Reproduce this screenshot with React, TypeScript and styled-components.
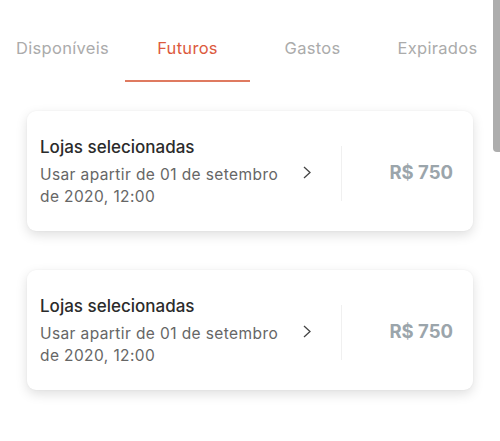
import React, { useState } from "react";
import styled, { createGlobalStyle } from "styled-components";

const GlobalStyle = createGlobalStyle`
  html, body {
    margin: 0;
    padding: 0;
    background: #ffffff;
    font-family: "Inter", "Open Sans", sans-serif;
  }
`;

const Page = styled.div`
  position: relative;
  width: 500px;
  height: 441px;
  overflow: hidden;
  background: #ffffff;
`;

const TabBar = styled.div`
  display: grid;
  grid-template-columns: repeat(4, 1fr);
  height: 82px;
`;

interface TabProps {
  active?: boolean;
}

const Tab = styled.div<TabProps>`
  display: flex;
  justify-content: center;
  align-items: flex-start;
  padding-top: 38px;
  box-sizing: border-box;
  font-size: 16.5px;
  letter-spacing: 0.3px;
  color: ${(props) => (props.active ? "#dc5a3e" : "#ababab")};
  border-bottom: 2px solid
    ${(props) => (props.active ? "#df7a60" : "transparent")};
`;

const List = styled.div`
  display: flex;
  flex-direction: column;
  gap: 39px;
  padding: 29px 27px 0;
`;

const Card = styled.div`
  display: flex;
  align-items: center;
  height: 120px;
  box-sizing: border-box;
  padding: 0 20px 0 13px;
  background: #ffffff;
  border-radius: 9px;
  box-shadow: 0 4px 12px rgba(0, 0, 0, 0.13), 0 0 2px rgba(0, 0, 0, 0.05);
`;

const Info = styled.div`
  width: 250px;
  display: flex;
  flex-direction: column;
`;

const Title = styled.div`
  font-size: 17px;
  font-weight: 500;
  color: #2b2b2b;
  letter-spacing: 0px;
  line-height: 24px;
  white-space: nowrap;
`;

const Subtitle = styled.div`
  margin-top: 5px;
  font-size: 15.5px;
  color: #666666;
  letter-spacing: 0.4px;
  line-height: 22px;
  white-space: nowrap;
`;

const Chevron = styled.div`
  width: 51px;
  display: flex;
  justify-content: flex-start;
  align-items: center;
  margin-top: 2px;
  padding-left: 13px;
  box-sizing: border-box;
`;

const Divider = styled.div`
  width: 1px;
  height: 55px;
  background: #f0f0f0;
  margin-top: 4px;
`;

const Price = styled.div`
  flex: 1;
  text-align: right;
  font-size: 18.5px;
  font-weight: 700;
  color: #9ba5ab;
  margin-top: 2px;
`;

const Scrollbar = styled.div`
  position: absolute;
  top: 0;
  right: 0;
  width: 7px;
  height: 152px;
  background: #adadad;
  border-radius: 0 0 0 4px;
`;

const tabs = ["Disponíveis", "Futuros", "Gastos", "Expirados"];

const vouchers = [
  { store: "Lojas selecionadas", lines: ["Usar apartir de 01 de setembro", "de 2020, 12:00"], value: "R$ 750" },
  { store: "Lojas selecionadas", lines: ["Usar apartir de 01 de setembro", "de 2020, 12:00"], value: "R$ 750" },
];

export default function App(): React.ReactElement {
  const [current, setCurrent] = useState<number>(1);

  return (
    <Page>
      <GlobalStyle />
      <TabBar>
        {tabs.map((t, i) => (
          <Tab key={t} active={i === current} onClick={() => setCurrent(i)}>
            {t}
          </Tab>
        ))}
      </TabBar>
      <List>
        {vouchers.map((v, i) => (
          <Card key={i}>
            <Info>
              <Title>{v.store}</Title>
              <Subtitle>
                {v.lines[0]}
                <br />
                {v.lines[1]}
              </Subtitle>
            </Info>
            <Chevron>
              <svg width="8" height="13" viewBox="0 0 8 13" fill="none">
                <path d="M1 1l6 5.5L1 12" stroke="#444" strokeWidth="1.3" />
              </svg>
            </Chevron>
            <Divider />
            <Price>{v.value}</Price>
          </Card>
        ))}
      </List>
      <Scrollbar />
    </Page>
  );
}
